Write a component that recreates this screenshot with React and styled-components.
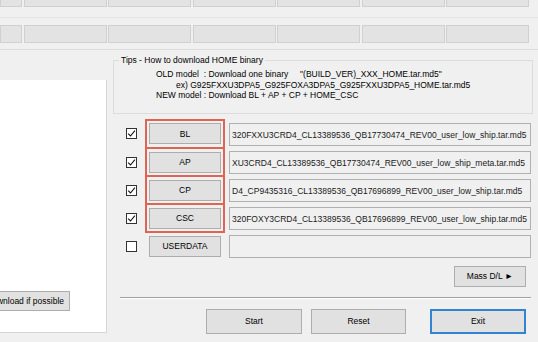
import React from 'react';
import styled, { createGlobalStyle } from 'styled-components';

const GlobalStyle = createGlobalStyle`
  html, body {
    margin: 0;
    padding: 0;
    background: #f0f0f0;
  }
  body {
    font-family: "Liberation Sans", Arial, sans-serif;
    font-size: 8.5px;
    color: #000;
  }
`;

const Window = styled.div`
  width: 538px;
  height: 342px;
  overflow: hidden;
  background: #f0f0f0;
  display: flex;
  flex-direction: column;
`;

const Header = styled.div`
  height: 50px;
  flex: none;
  border-bottom: 1px solid #dcdcdc;
  box-sizing: border-box;
  display: flex;
  flex-direction: column;
`;

const CellRow = styled.div`
  display: grid;
  grid-template-columns: 22px repeat(6, 83px);
  column-gap: 1.5px;
  height: ${p => p.$h}px;
`;

const Cell = styled.div`
  background: #e3e3e3;
  border: 1px solid #d0d0d0;
  border-top-width: ${p => (p.$cut ? 0 : 1)}px;
`;

const Rule = styled.div`
  height: 1px;
  background: #e4e4e4;
  margin: 10px 0 7px;
`;

const Main = styled.div`
  flex: 1;
  display: flex;
  min-height: 0;
`;

const LeftPanel = styled.div`
  width: 107px;
  flex: none;
  padding-top: 30px;
  padding-bottom: 9px;
  display: flex;
  flex-direction: column;
`;

const LogBox = styled.div`
  flex: 1;
  background: #fff;
  border-right: 1px solid #d6d6d6;
  border-bottom: 1px solid #d6d6d6;
  overflow: hidden;
  display: flex;
  flex-direction: column;
  justify-content: flex-end;
  padding-bottom: 21px;
`;

const Button = styled.button`
  font-family: inherit;
  font-size: 8.5px;
  color: #000;
  background: #e1e1e1;
  border: 1px solid #adadad;
  padding: 0;
  width: ${p => p.$w}px;
  height: ${p => p.$h || 21}px;
  flex: none;
  white-space: nowrap;
  overflow: hidden;
  cursor: default;
`;

const DefaultButton = styled(Button)`
  border: 2px solid #3383d3;
`;

const ClippedButton = styled(Button)`
  margin-left: -27px;
  text-align: right;
  padding-right: 5px;
  box-sizing: border-box;
`;

const RightPanel = styled.div`
  flex: 1;
  margin-left: 6px;
  margin-right: 5px;
  display: flex;
  flex-direction: column;
`;

const GroupBox = styled.fieldset`
  margin: 5px 0 0;
  padding: 4px 0 12px;
  border: 1px solid #dcdcdc;
  min-width: 0;
`;

const Legend = styled.legend`
  margin-left: 5px;
  padding: 0 2px;
  line-height: 10px;
`;

const TipLine = styled.div`
  padding-left: ${p => p.$indent}px;
  line-height: 10.5px;
  white-space: pre;
`;

const Rows = styled.div`
  margin-top: 5px;
  display: flex;
  flex-direction: column;
`;

const FileRow = styled.div`
  display: grid;
  grid-template-columns: 32px 80px 1fr;
  align-items: center;
  margin-right: 2px;
`;

const CheckCell = styled.div`
  justify-self: end;
  margin-right: 8px;
  display: flex;
`;

const Box = styled.span`
  width: 11px;
  height: 11px;
  box-sizing: border-box;
  border: 1px solid #333;
  background: #fff;
  display: flex;
  align-items: center;
  justify-content: center;
`;

const ButtonCell = styled.div`
  box-sizing: border-box;
  height: ${p => (p.$top ? 30 : 28)}px;
  border: 2px solid ${p => (p.$red ? '#dd6552' : 'transparent')};
  border-top-width: ${p => (p.$top ? 2 : 0)}px;
  display: flex;
  align-items: center;
  justify-content: center;
  padding-top: ${p => (p.$top ? 0 : 1)}px;
`;

const PathField = styled.div`
  height: 23px;
  box-sizing: border-box;
  margin-left: 4px;
  margin-top: ${p => (p.$top ? 2 : 0)}px;
  border: 1px solid #b0b0b0;
  background: #f0f0f0;
  color: #1a1a1a;
  overflow: hidden;
  display: flex;
  align-items: center;
  padding: 0 2px 0 2px;
  white-space: nowrap;
`;

const MassRow = styled.div`
  display: flex;
  justify-content: flex-end;
  margin: 5px 7px 0 0;
`;

const Separator = styled.div`
  height: 1px;
  background: #a0a0a0;
  box-shadow: 0 1px 0 #fff;
  margin: 10px 2px 0 7px;
`;

const ActionRow = styled.div`
  display: flex;
  justify-content: flex-end;
  margin: 11px 7px 0 0;
`;

const ActionGap = styled.div`
  width: ${p => p.$w}px;
  flex: none;
`;

const Check = ({ checked }) => (
  <CheckCell>
    <Box>
      {checked && (
        <svg width="9" height="9" viewBox="0 0 9 9">
          <path d="M1.2 4.6 L3.5 7 L7.9 1.6" fill="none" stroke="#111" strokeWidth="1.1" />
        </svg>
      )}
    </Box>
  </CheckCell>
);

const files = [
  { label: 'BL', path: '320FXXU3CRD4_CL13389536_QB17730474_REV00_user_low_ship.tar.md5' },
  { label: 'AP', path: 'XU3CRD4_CL13389536_QB17730474_REV00_user_low_ship_meta.tar.md5' },
  { label: 'CP', path: 'D4_CP9435316_CL13389536_QB17696899_REV00_user_low_ship.tar.md5' },
  { label: 'CSC', path: '320FOXY3CRD4_CL13389536_QB17696899_REV00_user_low_ship.tar.md5' },
];

export default function App() {
  return (
    <Window>
      <GlobalStyle />
      <Header>
        <CellRow $h={7}>
          {Array.from({ length: 7 }).map((_, i) => <Cell key={i} $cut />)}
        </CellRow>
        <Rule />
        <CellRow $h={18}>
          {Array.from({ length: 7 }).map((_, i) => <Cell key={i} />)}
        </CellRow>
      </Header>
      <Main>
        <LeftPanel>
          <LogBox>
            <ClippedButton $w={97} $h={20}>Download if possible</ClippedButton>
          </LogBox>
        </LeftPanel>
        <RightPanel>
          <GroupBox>
            <Legend>Tips - How to download HOME binary</Legend>
            <TipLine $indent={42}>{'OLD model  : Download one binary     "(BUILD_VER)_XXX_HOME.tar.md5"'}</TipLine>
            <TipLine $indent={62}>ex) G925FXXU3DPA5_G925FOXA3DPA5_G925FXXU3DPA5_HOME.tar.md5</TipLine>
            <TipLine $indent={42}>NEW model : Download BL + AP + CP + HOME_CSC</TipLine>
          </GroupBox>
          <Rows>
            {files.map((f, i) => (
              <FileRow key={f.label}>
                <Check checked />
                <ButtonCell $red $top={i === 0}>
                  <Button $w={72}>{f.label}</Button>
                </ButtonCell>
                <PathField $top={i === 0}>{f.path}</PathField>
              </FileRow>
            ))}
            <FileRow>
              <Check />
              <ButtonCell>
                <Button $w={72}>USERDATA</Button>
              </ButtonCell>
              <PathField />
            </FileRow>
          </Rows>
          <MassRow>
            <Button $w={72}>Mass D/L ►</Button>
          </MassRow>
          <Separator />
          <ActionRow>
            <Button $w={96} $h={25}>Start</Button>
            <ActionGap $w={9} />
            <Button $w={95} $h={25}>Reset</Button>
            <ActionGap $w={24} />
            <DefaultButton $w={96} $h={25}>Exit</DefaultButton>
          </ActionRow>
        </RightPanel>
      </Main>
    </Window>
  );
}
